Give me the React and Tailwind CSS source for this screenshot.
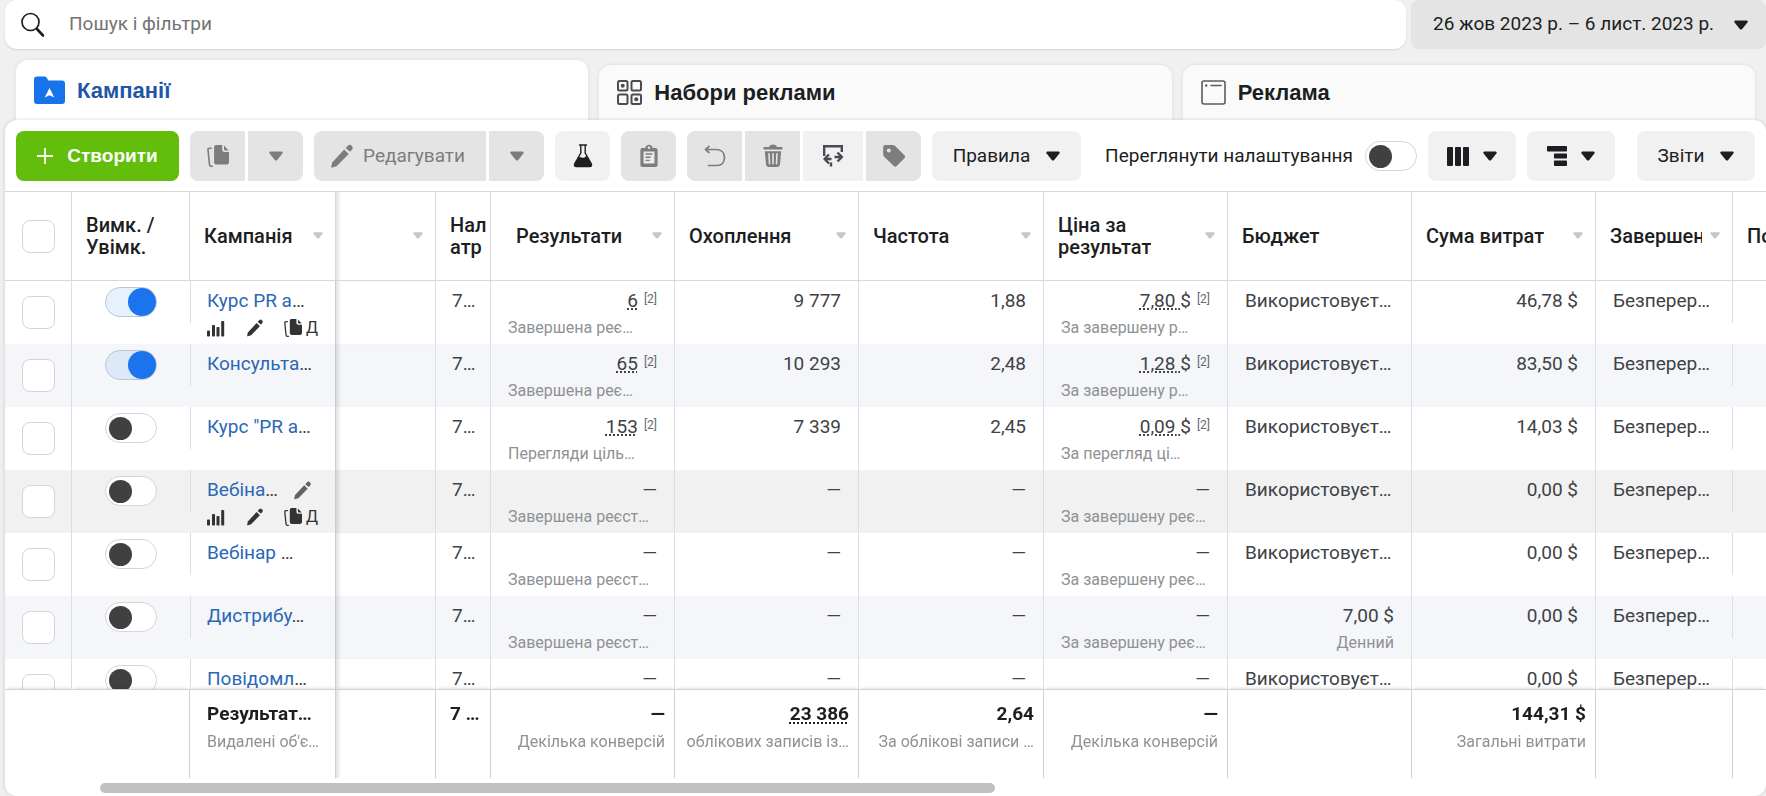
import { useState } from "react";
import clsx from "clsx";

const COLUMNS = [67, 118, 146, 100, 55, 184, 184, 185, 184, 184, 184, 137];

const CAMPAIGNS = [
  {
    name: "Курс PR а",
    active: true,
    tools: true,
    results: "6",
    resultType: "Завершена реє…",
    reach: "9 777",
    frequency: "1,88",
    cost: "7,80",
    costType: "За завершену р…",
    spent: "46,78 $",
  },
  {
    name: "Консульта",
    active: true,
    results: "65",
    resultType: "Завершена реє…",
    reach: "10 293",
    frequency: "2,48",
    cost: "1,28",
    costType: "За завершену р…",
    spent: "83,50 $",
  },
  {
    name: 'Курс "PR а',
    results: "153",
    resultType: "Перегляди ціль…",
    reach: "7 339",
    frequency: "2,45",
    cost: "0,09",
    costType: "За перегляд ці…",
    spent: "14,03 $",
  },
  {
    name: "Вебіна",
    tools: true,
    hovered: true,
    resultType: "Завершена реєст…",
    costType: "За завершену реє…",
    spent: "0,00 $",
  },
  {
    name: "Вебінар ",
    resultType: "Завершена реєст…",
    costType: "За завершену реє…",
    spent: "0,00 $",
  },
  {
    name: "Дистрибу",
    resultType: "Завершена реєст…",
    costType: "За завершену реє…",
    budget: "7,00 $",
    spent: "0,00 $",
  },
  {
    name: "Повідомл",
    resultType: "Завершена реєст…",
    costType: "За завершену реє…",
    spent: "0,00 $",
  },
];

function Caret({ className = "w-[14px]" }) {
  return (
    <svg viewBox="0 0 14 10" className={clsx("shrink-0", className)} fill="currentColor" aria-hidden="true">
      <path d="M1.6.4h10.8c1.2 0 1.7 1.3 1 2.1L8.2 8.9c-.7.8-1.7.8-2.4 0L.6 2.5C-.1 1.7.4.4 1.6.4z" />
    </svg>
  );
}

function PencilIcon({ className }) {
  return (
    <svg viewBox="0 0 22 24" className={className} fill="currentColor" aria-hidden="true">
      <path d="M1.4 18.2 13.2 5.6l4.5 4.4L5.6 22.2l-4.3 1.4c-.7.2-1.2-.2-1.1-.9z" />
      <path d="m14.6 4.1 2.2-2.4c1.1-1.2 2.6-1.2 3.7-.1l.4.4c1.1 1.1 1.1 2.6 0 3.7l-1.8 2z" />
    </svg>
  );
}

function CopyIcon({ className }) {
  return (
    <svg viewBox="0 0 22 22" className={className} aria-hidden="true">
      <path d="M4.2 3.2H2.4C1.3 3.2.9 3.8 1 4.8l1.5 14.800c.1 1.100.7 1.600 1.700 1.600h1.200" fill="none" stroke="currentColor" strokeWidth="1.6" strokeLinecap="round" />
      <path d="M9.6 0h5.600v4.600c0 1.600.8 2.400 2.400 2.400H22v9.900c0 1.700-.9 2.600-2.600 2.600H9.700C8 19.500 7.100 18.600 7.100 16.900V2.500C7.100.8 7.900 0 9.600 0z" fill="currentColor" />
      <path d="m17 .5 4.600 4.900h-3.400c-.8 0-1.200-.4-1.200-1.200z" fill="currentColor" />
    </svg>
  );
}

function SearchIcon() {
  return (
    <svg viewBox="0 0 24 26" className="w-6" fill="none" stroke="#1c1e21" strokeLinecap="round" aria-hidden="true">
      <circle cx="9.5" cy="10" r="8.5" strokeWidth="1.7" />
      <path d="m16 17 6 6.5" strokeWidth="2.6" />
    </svg>
  );
}

function FolderIcon() {
  return (
    <svg viewBox="0 0 31 28" className="w-[31px]" aria-hidden="true">
      <path d="M3 .5h7c1.5 0 2.5.6 3.2 2l1 2H28c2 0 3 1 3 3V25c0 2-1 3-3 3H3c-2 0-3-1-3-3V3.5c0-2 1-3 3-3z" fill="#1773ea" />
      <path d="m15.5 12 4.800 9.500-4.800-2.300-4.800 2.300z" fill="#fff" />
    </svg>
  );
}

function AdSetsIcon() {
  return (
    <svg viewBox="0 0 25 25" className="w-[25px]" fill="none" stroke="#4b4c4f" strokeWidth="2" aria-hidden="true">
      <rect x="1" y="1" width="9.5" height="9.5" rx="1.5" />
      <rect x="14.5" y="1" width="9.5" height="9.5" rx="1.5" />
      <rect x="1" y="14.5" width="9.5" height="9.5" rx="1.5" />
      <rect x="14.5" y="14.5" width="9.5" height="9.5" rx="1.5" />
      <circle cx="5.75" cy="5.75" r="2" fill="#4b4c4f" stroke="none" />
      <circle cx="19.25" cy="19.25" r="2" fill="#4b4c4f" stroke="none" />
    </svg>
  );
}

function AdIcon() {
  return (
    <svg viewBox="0 0 25 25" className="w-[25px]" fill="none" stroke="#5a5c5e" strokeWidth="1.6" strokeLinecap="round" aria-hidden="true">
      <rect x="1" y="1" width="23" height="23" rx="2" />
      <path d="M10 5.5h10" />
      <circle cx="5.2" cy="5.5" r="1.2" fill="#5a5c5e" stroke="none" />
    </svg>
  );
}

function FlaskIcon() {
  return (
    <svg viewBox="0 0 20 24" className="w-5" aria-hidden="true">
      <path d="M6.5 1h7M7.800 1v8L1.800 19.500c-.9 1.800-.2 3 1.700 3h13c1.900 0 2.600-1.200 1.700-3L12.200 9V1" fill="none" stroke="#1c1e21" strokeWidth="1.4" strokeLinecap="round" />
      <path d="M5 13.500c2.500-1.600 4 .8 6 .2 1.200-.3 1.800-1.400 3-1.700l4 8c.9 1.700.2 2.700-1.500 2.700h-13c-1.700 0-2.400-1-1.500-2.700z" fill="#1c1e21" />
    </svg>
  );
}

function ClipboardIcon() {
  return (
    <svg viewBox="0 0 18 24" className="w-[18px]" aria-hidden="true">
      <path d="M2.600 4h2.600C5.700 2 7 .7 9 .7S12.300 2 12.800 4h2.600C16.800 4 17.600 4.800 17.600 6.200v14.600c0 1.400-.8 2.200-2.200 2.200H2.600C1.200 23 .4 22.200.4 20.800V6.200C.4 4.800 1.200 4 2.600 4z" fill="#7d7d7d" />
      <path d="M3.500 7.500h11v12h-11z" fill="#e9e9e9" />
      <circle cx="9" cy="3.8" r="1.3" fill="#e4e4e4" />
      <path d="M5.600 10h6.800M5.600 13.200h5M5.600 16.400h4" stroke="#7d7d7d" strokeWidth="1.4" />
    </svg>
  );
}

function UndoIcon() {
  return (
    <svg viewBox="0 0 22 22" className="w-[22px]" fill="none" stroke="#7d7d7d" strokeWidth="1.7" strokeLinecap="round" strokeLinejoin="round" aria-hidden="true">
      <path d="M1.800 4.500H12c5 0 8.500 3 8.500 8s-3 8-7.500 8H4.500" />
      <path d="M5 1.500 1.500 4.500 5 7.500" />
    </svg>
  );
}

function TrashIcon() {
  return (
    <svg viewBox="0 0 20 24" className="w-5" aria-hidden="true">
      <path d="M1.600 3H6c.5-1.600 1.800-2.500 4-2.500s3.500.9 4 2.500h4.400c1.700 0 1.700 2.500 0 2.500H1.600C-.1 5.500-.1 3 1.600 3z" fill="#7d7d7d" />
      <path d="M1.800 7.300h16.400l-1.200 13c-.2 1.800-1.200 2.700-3 2.700H6c-1.800 0-2.800-.9-3-2.700z" fill="#7d7d7d" />
      <path d="m6 9.800.5 10M10 9.800v10M14 9.800l-.5 10" stroke="#e4e4e4" strokeWidth="1.6" strokeLinecap="round" />
    </svg>
  );
}

function ExportIcon() {
  return (
    <svg viewBox="0 0 22 24" className="w-[22px]" fill="none" stroke="#484b52" strokeWidth="2.4" aria-hidden="true">
      <path d="M2.200 12V2.200h17.600V8M1 2.200h20" />
      <path d="m7 10.500-4.500 4.500L7 19.500M3 15h6.500M15.500 8.500l4.500 4.500-4.500 4.500M19.500 13h-7M9 18.500v4" strokeLinejoin="round" />
    </svg>
  );
}

function TagIcon() {
  return (
    <svg viewBox="0 0 24 24" className="w-6" aria-hidden="true">
      <path d="M3.500 1h7c1 0 1.900.3 2.600 1l9.300 9.300c.9.900.9 2 0 2.900l-7.700 7.900c-.9.900-2 .9-2.900 0L2.200 12.800c-.7-.7-1-1.500-1-2.500V3.300C1.200 1.800 2 1 3.500 1z" fill="#7d7d7d" />
      <circle cx="6.8" cy="6.5" r="2" fill="#e4e4e4" />
    </svg>
  );
}

function ColumnsIcon() {
  return (
    <svg viewBox="0 0 22 19" className="w-[22px]" fill="#1c1e21" aria-hidden="true">
      <rect width="6" height="19" rx="1" />
      <rect x="8" width="6" height="19" rx="1" />
      <rect x="16" width="6" height="19" rx="1" />
    </svg>
  );
}

function BreakdownIcon() {
  return (
    <svg viewBox="0 0 20 20" className="w-5" fill="#1c1e21" aria-hidden="true">
      <rect width="20" height="5.5" rx=".8" />
      <rect x="7" y="7.5" width="13" height="5" rx=".8" />
      <rect x="7" y="14.5" width="13" height="5.5" rx=".8" />
    </svg>
  );
}

function ChartIcon() {
  return (
    <svg viewBox="0 0 18 17" className="w-[18px]" fill="#333" aria-hidden="true">
      <rect y="10.5" width="3" height="6" rx=".8" />
      <rect x="5" y="5" width="3" height="11.5" rx=".8" />
      <rect x="9.5" y="7" width="3" height="9.5" rx=".8" />
      <rect x="14.2" y="1" width="3" height="15.5" rx=".8" />
    </svg>
  );
}

function ToolButton({ children, label, muted, className = "w-[55px] rounded-lg" }) {
  return (
    <button
      type="button"
      aria-label={label}
      className={clsx(
        "flex h-[50px] shrink-0 items-center justify-center",
        muted ? "bg-[#e4e4e4] text-[#7d7d7d]" : "bg-[#f1f1f1] text-[#1c1e21]",
        className
      )}
    >
      {children}
    </button>
  );
}

function Switch({ label, defaultChecked = false, id }) {
  const [checked, setChecked] = useState(defaultChecked);

  return (
    <label
      className={clsx(
        "inline-flex h-[30px] w-[52px] shrink-0 cursor-pointer items-center rounded-full border align-top",
        checked ? "justify-end border-[#bcc6d2] bg-[#1877f2]/10" : "border-[#d3d5d9] bg-white pl-[3px]"
      )}
    >
      <input
        id={id}
        type="checkbox"
        role="switch"
        aria-label={label}
        checked={checked}
        onChange={(e) => setChecked(e.target.checked)}
        className="sr-only"
      />
      <span className={clsx("rounded-full", checked ? "size-7 bg-[#1b74ee]" : "size-[23px] bg-[#404040]")} />
    </label>
  );
}

function Checkbox({ label }) {
  return (
    <input
      type="checkbox"
      aria-label={label}
      className="block size-[33px] appearance-none rounded-lg border border-[#d3d5d9] bg-white checked:bg-[#1b74ee]"
    />
  );
}

function Tab({ icon, children, active }) {
  return (
    <button
      type="button"
      role="tab"
      aria-selected={!!active}
      className={clsx(
        "flex flex-1 items-center gap-3 rounded-t-xl px-[18px] font-['Liberation_Sans',Arial,sans-serif] text-[22px] font-bold shadow-[0_0_4px_rgba(0,0,0,0.08)]",
        active ? "h-[60px] bg-white text-[#1e57a8]" : "h-[55px] bg-[#fafafa] text-[#1c1e21]"
      )}
    >
      {icon}
      {children}
    </button>
  );
}

function HeadCell({ children, caret, className = "pr-3 pl-[14px]", edge = "border-r" }) {
  return (
    <th
      scope="col"
      className={clsx(
        "sticky top-0 z-20 h-[90px] overflow-hidden border-y border-[#d6d8db] bg-white text-left font-medium",
        edge,
        className
      )}
    >
      <div className="flex items-center justify-between gap-2">
        <span className="min-w-0 overflow-hidden">{children}</span>
        {caret && <Caret className="w-[10px] text-[#c3c6cb]" />}
      </div>
    </th>
  );
}

function Cell({ children, className = "px-[17px]" }) {
  return <td className={clsx("h-[63px] overflow-hidden border-r border-[#dcdee1] pt-[9px] align-top whitespace-nowrap", className)}>{children}</td>;
}

function Metric({ value, unit, note }) {
  if (!value) {
    return <div className="text-right">—</div>;
  }
  return (
    <div className="flex justify-end">
      <span>
        <span className={clsx(note && "underline decoration-dotted decoration-2 underline-offset-1")}>
          {value}
          {unit && " "}
        </span>
        {unit}
      </span>
      {note && <sup className="top-0 ml-[6px] text-xs leading-[18px] text-[#65676b]">[2]</sup>}
    </div>
  );
}

function SubText({ children, className = "text-left" }) {
  return <div className={clsx("mt-1 overflow-hidden text-base leading-6 text-[#8f9194]", className)}>{children}</div>;
}

function CampaignRow({ campaign, striped }) {
  return (
    <tr className={campaign.hovered ? "bg-[#f1f1f1]" : striped ? "bg-[#f4f6f9]" : "bg-white"}>
      <td className="border-r border-[#dcdee1] pt-[15px] pl-[17px] align-top">
        <Checkbox label={`Вибрати ${campaign.name}`} />
      </td>
      <td className="pt-[6px] pl-[33px] align-top">
        <Switch label={`Увімкнути ${campaign.name}`} defaultChecked={campaign.active} />
      </td>
      <td className="border-r border-[#c9cbce] align-top whitespace-nowrap">
        <div className="h-[42px] border-l border-[#dcdee1] pt-[9px] pl-4">
          <div className="flex items-center">
            <a href="#campaign" className="whitespace-pre text-[#2a67b5]">
              {campaign.name}
              <span className="text-[#404040]">…</span>
            </a>
            {campaign.hovered && (
              <button type="button" aria-label="Змінити назву" className="ml-4 text-[#5f6268]">
                <PencilIcon className="w-[17px]" />
              </button>
            )}
          </div>
          {campaign.tools && (
            <div className="mt-1 flex items-center leading-6 text-[#333]">
              <button type="button" aria-label="Діаграми">
                <ChartIcon />
              </button>
              <button type="button" aria-label="Редагувати" className="ml-[22px]">
                <PencilIcon className="w-4" />
              </button>
              <button type="button" aria-label="Дублювати" className="ml-[21px] flex items-center gap-1 text-base">
                <CopyIcon className="w-[18px]" />Д
              </button>
            </div>
          )}
        </div>
      </td>
      <Cell className="shadow-[inset_5px_0_4px_-3px_rgba(0,0,0,0.15)]" />
      <Cell className="pl-4">7…</Cell>
      <Cell>
        <Metric value={campaign.results} note />
        <SubText>{campaign.resultType}</SubText>
      </Cell>
      <Cell>
        <Metric value={campaign.reach} />
      </Cell>
      <Cell>
        <Metric value={campaign.frequency} />
      </Cell>
      <Cell>
        <Metric value={campaign.cost} unit="$" note />
        <SubText>{campaign.costType}</SubText>
      </Cell>
      <Cell>
        {campaign.budget ? (
          <>
            <Metric value={campaign.budget} />
            <SubText className="text-right">Денний</SubText>
          </>
        ) : (
          "Використовуєт…"
        )}
      </Cell>
      <Cell>
        <Metric value={campaign.spent} />
      </Cell>
      <td className="pl-[17px] align-top whitespace-nowrap">
        <div className="h-[42px] border-r border-[#dcdee1] pt-[9px]">Безперер…</div>
      </td>
      <td />
    </tr>
  );
}

function FootCell({
  value,
  sub,
  dotted,
  className = "pr-[9px] text-right",
  edge = "border-r",
  shadow = "shadow-[0_-3px_3px_-2px_rgba(0,0,0,0.12)]",
}) {
  return (
    <td
      className={clsx(
        "sticky bottom-0 z-20 h-[89px] overflow-hidden border-t border-[#d0d2d5] bg-white pt-3 align-top whitespace-nowrap",
        edge,
        shadow,
        className
      )}
    >
      <div className="leading-6 font-bold text-[#1c1e21]">
        <span className={clsx(dotted && "underline decoration-dotted decoration-2 underline-offset-2")}>{value}</span>
      </div>
      {sub && <SubText className="">{sub}</SubText>}
    </td>
  );
}

function CampaignTable() {
  return (
    <div className="min-h-0 flex-1 overflow-auto [scrollbar-width:none]">
      <table className="w-full table-fixed border-separate border-spacing-0 text-[19px] leading-[22px] text-[#404247]">
        <colgroup>
          {COLUMNS.map((width, i) => (
            <col key={i} style={{ width }} />
          ))}
          <col />
        </colgroup>
        <thead className="text-xl leading-[22px] text-[#1c1e21]">
          <tr>
            <HeadCell className="pl-[17px]">
              <Checkbox label="Вибрати все" />
            </HeadCell>
            <HeadCell>
              Вимк. /<br />
              Увімк.
            </HeadCell>
            <HeadCell caret>Кампанія</HeadCell>
            <HeadCell caret className="pr-3 shadow-[inset_5px_0_4px_-3px_rgba(0,0,0,0.15)]" />
            <HeadCell className="pr-1 pl-[14px] whitespace-nowrap">
              Нал
              <br />
              атр
            </HeadCell>
            <HeadCell caret className="pr-3 pl-[25px]">
              Результати
            </HeadCell>
            <HeadCell caret>Охоплення</HeadCell>
            <HeadCell caret>Частота</HeadCell>
            <HeadCell caret>
              Ціна за
              <br />
              результат
            </HeadCell>
            <HeadCell>Бюджет</HeadCell>
            <HeadCell caret>Сума витрат</HeadCell>
            <HeadCell caret>Завершення</HeadCell>
            <HeadCell edge="border-r-0" className="pl-[14px] whitespace-nowrap">
              По
            </HeadCell>
          </tr>
        </thead>
        <tbody>
          {CAMPAIGNS.map((campaign, i) => (
            <CampaignRow key={campaign.name} campaign={campaign} striped={i % 2 === 1} />
          ))}
        </tbody>
        <tfoot>
          <tr>
            <FootCell edge="border-r-0" />
            <FootCell />
            <FootCell value="Результат…" sub="Видалені об'є…" className="pl-[17px]" />
            <FootCell shadow="shadow-[inset_5px_0_4px_-3px_rgba(0,0,0,0.15),0_-3px_3px_-2px_rgba(0,0,0,0.12)]" />
            <FootCell value="7 …" className="pl-[14px]" />
            <FootCell value="—" sub="Декілька конверсій" />
            <FootCell value="23 386" sub="облікових записів із…" dotted />
            <FootCell value="2,64" sub="За облікові записи …" />
            <FootCell value="—" sub="Декілька конверсій" />
            <FootCell />
            <FootCell value="144,31 $" sub="Загальні витрати" />
            <FootCell />
            <FootCell edge="border-r-0" />
          </tr>
        </tfoot>
      </table>
    </div>
  );
}

export default function App() {
  return (
    <div className="flex h-screen flex-col bg-[#f0f0f0] pl-[5px] font-[Roboto,sans-serif] text-[19px] text-[#1c1e21]">
      {/* Search and date range */}
      <div className="flex h-[49px] shrink-0 gap-[5px]">
        <label className="flex flex-1 items-center gap-6 rounded-xl bg-white pl-4 shadow-[0_1px_2px_rgba(0,0,0,0.12)]">
          <SearchIcon />
          <input
            type="text"
            aria-label="Пошук і фільтри"
            placeholder="Пошук і фільтри"
            className="flex-1 outline-none placeholder:text-[#737373]"
          />
        </label>
        <button type="button" className="flex w-[355px] items-center justify-between rounded-lg bg-[#e4e4e4] pr-[18px] pl-[22px]">
          26 жов 2023 р. – 6 лист. 2023 р.
          <Caret />
        </button>
      </div>

      <div role="tablist" className="flex h-[71px] shrink-0 items-end gap-[11px] pr-[11px] pl-[11px]">
        <Tab active icon={<FolderIcon />}>
          Кампанії
        </Tab>
        <Tab icon={<AdSetsIcon />}>Набори реклами</Tab>
        <Tab icon={<AdIcon />}>Реклама</Tab>
      </div>

      <main className="relative flex min-h-0 flex-1 flex-col overflow-hidden rounded-xl bg-white shadow-[0_0_4px_rgba(0,0,0,0.15)]">
        {/* Toolbar */}
        <div className="flex shrink-0 items-center gap-[11px] px-[11px] pt-[11px] pb-[10px]">
          <button
            type="button"
            className="flex h-[50px] w-[163px] shrink-0 items-center justify-center gap-[14px] rounded-lg bg-[#62be0b] font-['Liberation_Sans',Arial,sans-serif] font-bold text-white"
          >
            <svg viewBox="0 0 16 16" className="w-4" stroke="currentColor" strokeWidth="1.8" aria-hidden="true">
              <path d="M8 0v16M0 8h16" />
            </svg>
            Створити
          </button>
          <div className="flex gap-[3px]">
            <ToolButton muted label="Дублювати" className="w-[55px] rounded-l-lg">
              <CopyIcon className="w-[22px]" />
            </ToolButton>
            <ToolButton muted label="Параметри дублювання" className="w-[55px] rounded-r-lg">
              <Caret />
            </ToolButton>
          </div>
          <div className="flex gap-[3px]">
            <ToolButton muted className="w-[172px] gap-[10px] rounded-l-lg pr-1">
              <PencilIcon className="w-[22px]" />
              Редагувати
            </ToolButton>
            <ToolButton muted label="Параметри редагування" className="w-[55px] rounded-r-lg">
              <Caret />
            </ToolButton>
          </div>
          <ToolButton label="A/B-тест">
            <FlaskIcon />
          </ToolButton>
          <ToolButton muted label="Вставити">
            <ClipboardIcon />
          </ToolButton>
          <div className="flex gap-[3px]">
            <ToolButton muted label="Скасувати" className="w-[55px] rounded-l-lg">
              <UndoIcon />
            </ToolButton>
            <ToolButton muted label="Видалити" className="w-[55px]">
              <TrashIcon />
            </ToolButton>
            <ToolButton label="Експорт та імпорт" className="w-[60px]">
              <ExportIcon />
            </ToolButton>
            <ToolButton muted label="Теги" className="w-[55px] rounded-r-lg">
              <TagIcon />
            </ToolButton>
          </div>
          <ToolButton className="w-[149px] gap-4 rounded-lg">
            Правила
            <Caret />
          </ToolButton>
          <div className="ml-auto flex items-center gap-3">
            <label htmlFor="view-setup" className="whitespace-nowrap">
              Переглянути налаштування
            </label>
            <Switch id="view-setup" label="Переглянути налаштування" />
          </div>
          <ToolButton label="Стовпці" className="w-[88px] gap-[14px] rounded-lg">
            <ColumnsIcon />
            <Caret />
          </ToolButton>
          <ToolButton label="Розбивка" className="w-[88px] gap-[14px] rounded-lg">
            <BreakdownIcon />
            <Caret />
          </ToolButton>
          <ToolButton className="ml-[11px] w-[118px] gap-4 rounded-lg">
            Звіти
            <Caret />
          </ToolButton>
        </div>

        <CampaignTable />

        {/* Horizontal scrollbar */}
        <div className="h-[18px] shrink-0 pt-[5px] pl-[95px]">
          <div className="h-[10px] w-[895px] rounded-full bg-[#c1c1c1]" />
        </div>
      </main>
    </div>
  );
}
